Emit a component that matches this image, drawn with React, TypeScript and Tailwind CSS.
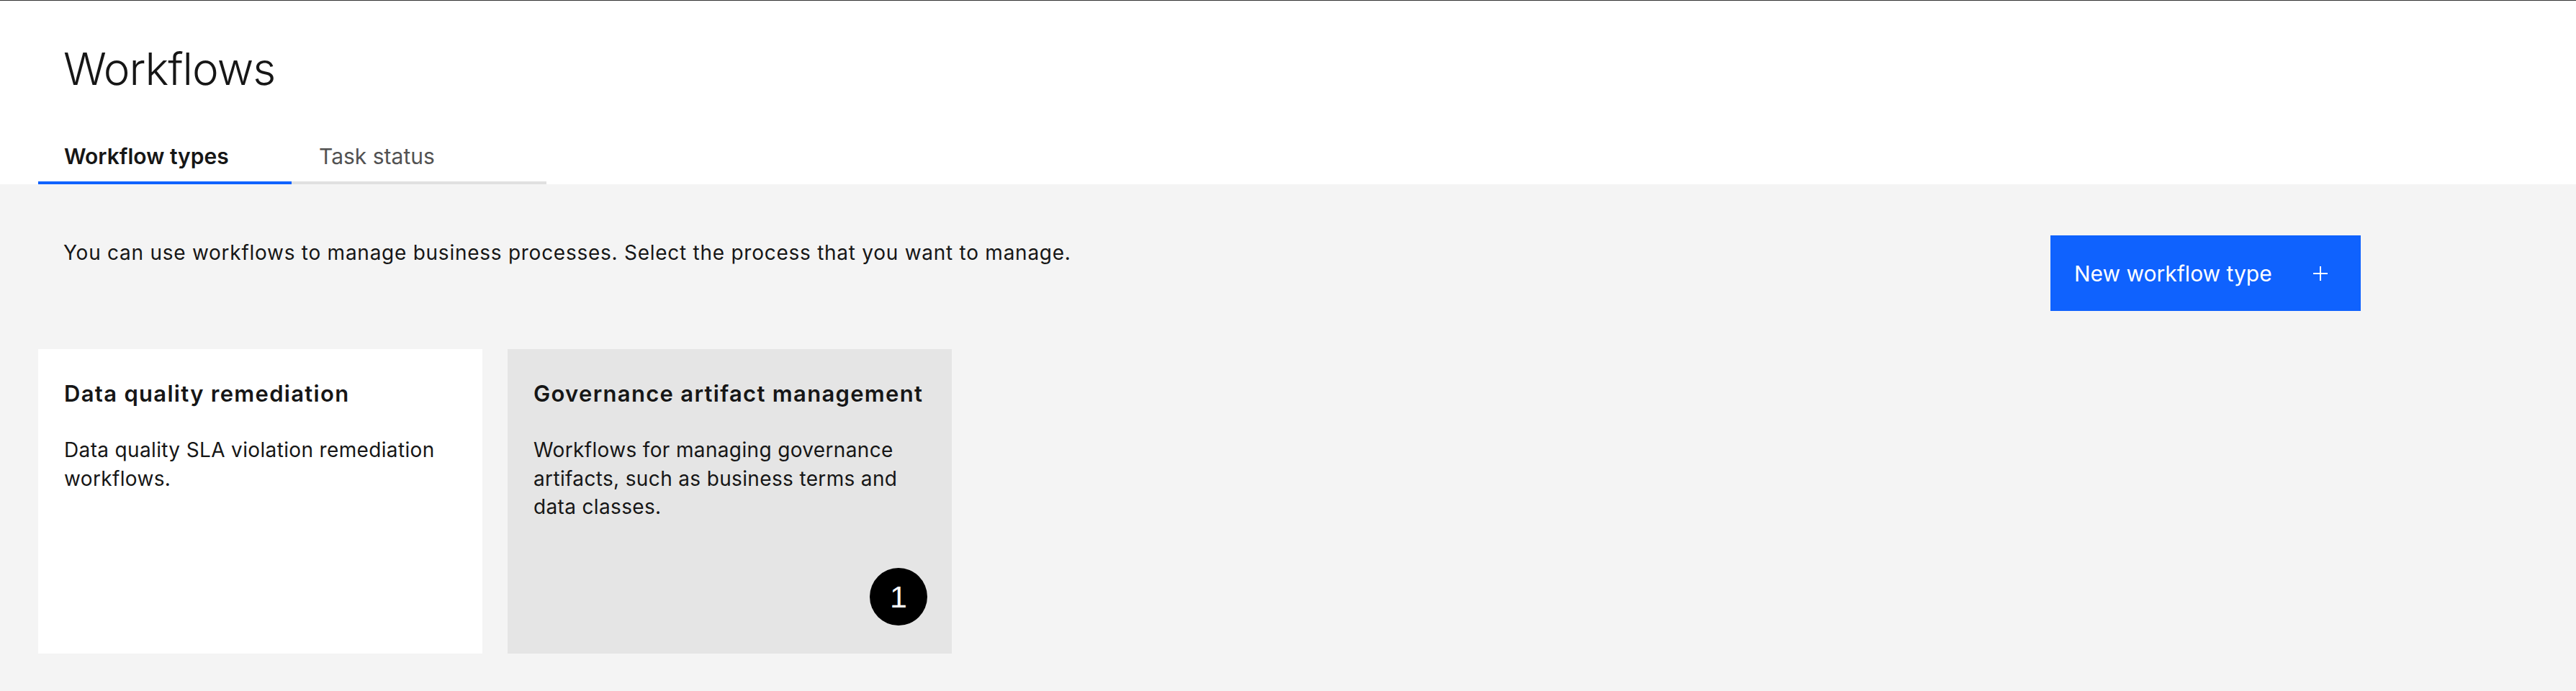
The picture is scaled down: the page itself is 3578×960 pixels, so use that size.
import React from "react";

const font = { fontFamily: '"Inter", "Liberation Sans", sans-serif' };

function Card({
  title,
  desc,
  active,
}: {
  title: string;
  desc: string;
  active?: boolean;
}) {
  return (
    <div
      className={`relative w-[617px] h-[423px] pl-[36px] pr-[30px] pt-[42px] ${
        active ? "bg-[#e5e5e5]" : "bg-white"
      }`}
    >
      <div className="text-[31px] leading-[40px] font-semibold tracking-[1.3px] text-[#161616] whitespace-nowrap">
        {title}
      </div>
      <div className="mt-[39px] text-[28px] leading-[39.5px] tracking-[0.35px] text-[#161616]">{desc}</div>
      {active && (
        <div
          className="absolute right-[34px] bottom-[39px] w-[80px] h-[80px] rounded-full bg-black text-white flex items-center justify-center text-[43px] leading-none"
          style={{ fontFamily: '"Liberation Sans", Arial, sans-serif' }}
        >
          1
        </div>
      )}
    </div>
  );
}

export default function App() {
  return (
    <div className="w-full h-[960px] flex flex-col border-t border-[#333333] bg-white" style={font}>
      <div className="h-[255px] flex flex-col bg-white">
        <h1 className="pl-[88px] pt-[55px] text-[62px] leading-[80px] font-light tracking-[-1px] text-[#161616]">
          Workflows
        </h1>
        <div className="mt-auto flex pl-[53px]">
          <div className="w-[352px] h-[74px] pl-[36px] flex items-center border-b-4 border-[#0f62fe] text-[30px] font-semibold text-[#161616]">
            Workflow types
          </div>
          <div className="w-[354px] h-[74px] pl-[38px] flex items-center border-b-4 border-[#e0e0e0] text-[30px] text-[#525252]">
            Task status
          </div>
        </div>
      </div>
      <div className="flex-1 bg-[#f4f4f4] flex flex-col">
        <div className="flex items-start justify-between pt-[71px] pr-[299px]">
          <p className="pl-[88px] pt-[4px] text-[28px] leading-[40px] tracking-[0.74px] text-[#161616]">
            You can use workflows to manage business processes. Select the process that you want to manage.
          </p>
          <button className="w-[431px] h-[105px] bg-[#0f62fe] text-white flex items-center justify-between pl-[33px] pr-[46px] text-[30px]">
            <span className="pt-[2px]">New workflow type</span>
            <svg width="20" height="20" viewBox="0 0 20 20" fill="none">
              <path d="M10 0V20M0 10H20" stroke="white" strokeWidth="2" />
            </svg>
          </button>
        </div>
        <div className="flex gap-[35px] pl-[53px] mt-[53px]">
          <Card
            title="Data quality remediation"
            desc="Data quality SLA violation remediation workflows."
          />
          <Card
            title="Governance artifact management"
            desc="Workflows for managing governance artifacts, such as business terms and data classes."
            active
          />
        </div>
      </div>
    </div>
  );
}
